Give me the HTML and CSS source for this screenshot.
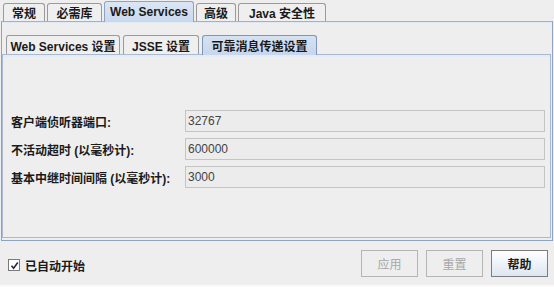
FILE: index.html
```html
<!DOCTYPE html>
<html lang="zh-CN">
<head>
    <meta charset="UTF-8">
    <meta name="viewport" content="width=device-width, initial-scale=1.0">
    <title>Web Services</title>
    <link rel="stylesheet" href="styles.css">
</head>
<body>
    <div class="window">
        <div class="tabs">
            <span class="tab t-general">常规</span>
            <span class="tab t-lib">必需库</span>
            <span class="tab active t-ws">Web Services</span>
            <span class="tab t-adv">高级</span>
            <span class="tab t-sec">Java 安全性</span>
        </div>
        <div class="panel">
            <div class="subtabs">
                <span class="subtab s-ws">Web Services 设置</span>
                <span class="subtab s-jsse">JSSE 设置</span>
                <span class="subtab active s-rm">可靠消息传递设置</span>
            </div>
            <div class="subpanel">
                <div class="form">
                    <label>客户端侦听器端口:</label>
                    <div class="field">32767</div>
                    <label>不活动超时 (以毫秒计):</label>
                    <div class="field">600000</div>
                    <label>基本中继时间间隔 (以毫秒计):</label>
                    <div class="field">3000</div>
                </div>
            </div>
        </div>
        <div class="footer">
            <label class="check">
                <span class="box">
                    <svg width="9" height="9" viewBox="0 0 9 9"><path d="M1.5 4.8 L3.6 7.2 L7.8 1.6" fill="none" stroke="#1c2a44" stroke-width="1.6"/></svg>
                </span>
                已自动开始
            </label>
            <div class="buttons">
                <button class="btn" disabled>应用</button>
                <button class="btn" disabled>重置</button>
                <button class="btn primary">帮助</button>
            </div>
        </div>
        <div class="strip"></div>
    </div>
</body>
</html>
```

FILE: styles.css
```css
body{
    margin: 0;
    background-color: #eeeeee;
    font-family: "Liberation Sans", "Noto Sans CJK SC", sans-serif;
    font-size: 12px;
    color: #1a1a1a;
}
.window{
    width: 554px;
    height: 287px;
    display: flex;
    flex-direction: column;
}
.tabs{
    display: flex;
    align-items: flex-end;
    height: 21px;
    padding-left: 3px;
    gap: 2px;
}
.tab{
    display: flex;
    align-items: center;
    justify-content: center;
    height: 17px;
    border: 1px solid #9a9a9a;
    border-bottom: none;
    border-radius: 3px 3px 0 0;
    background-color: #efefef;
    font-weight: bold;
    box-sizing: content-box;
}
.tab.active{
    height: 20px;
    margin-bottom: -1px;
    position: relative;
    background: linear-gradient(#dbe6f4, #c9d8ec);
    border-color: #8ea3c2;
}
.t-general{ width: 40px; }
.t-lib{ width: 53px; }
.t-ws{ width: 88px; }
.t-adv{ width: 38px; }
.t-sec{ width: 86px; }
.panel{
    height: 218px;
    margin: 0 1px;
    border: 1px solid #8ea3c2;
    border-top-color: #9fb2cc;
    box-shadow: inset 0 1px 0 #dfe8f3;
    display: flex;
    flex-direction: column;
}
.subtabs{
    display: flex;
    align-items: flex-end;
    height: 32px;
    padding-left: 4px;
    gap: 3px;
}
.subtab{
    display: flex;
    align-items: center;
    justify-content: center;
    height: 18px;
    border: 1px solid #9a9a9a;
    border-bottom: none;
    border-radius: 3px 3px 0 0;
    background-color: #efefef;
    font-weight: bold;
}
.subtab.active{
    background: linear-gradient(#d6e2f2, #c6d6ec);
    border-color: #7f96bb;
    margin-bottom: -1px;
    height: 19px;
    position: relative;
}
.s-ws{ width: 112px; }
.s-jsse{ width: 74px; }
.s-rm{ width: 113px; }
.subpanel{
    flex: 1;
    margin: 0 1px 2px 0;
    border: 1px solid #a9b9d2;
    box-shadow: inset 0 2px 0 #e3ebf5;
    padding: 55px 5px 0 8px;
}
.form{
    display: grid;
    grid-template-columns: 174px 1fr;
    row-gap: 6px;
    align-items: center;
}
.form label{
    font-weight: bold;
    white-space: nowrap;
}
.field{
    height: 20px;
    line-height: 20px;
    border: 1px solid #c4c4c4;
    background-color: #ececec;
    padding-left: 2px;
    font-size: 12px;
    color: #444;
}
.footer{
    flex: 1;
    display: flex;
    align-items: center;
    justify-content: space-between;
    padding: 0 6px 0 8px;
}
.check{
    display: flex;
    align-items: center;
    gap: 5px;
    font-weight: bold;
    margin-top: 4px;
}
.box{
    width: 10px;
    height: 10px;
    border: 1px solid #7a7a7a;
    background-color: #fff;
    display: flex;
    align-items: center;
    justify-content: center;
}
.buttons{
    display: flex;
    gap: 8px;
}
.btn{
    width: 57px;
    height: 27px;
    border: 1px solid #b4b4b4;
    background-color: #eeeeee;
    font-family: "Liberation Sans", "Noto Sans CJK SC", sans-serif;
    font-size: 12px;
    color: #a8a8a8;
    padding: 0;
}
.btn.primary{
    border-color: #7d7d7d;
    background: linear-gradient(#ffffff, #dde6f1);
    color: #1a1a1a;
    font-weight: bold;
}
.strip{
    height: 2px;
    background-color: #fafafa;
}
```
